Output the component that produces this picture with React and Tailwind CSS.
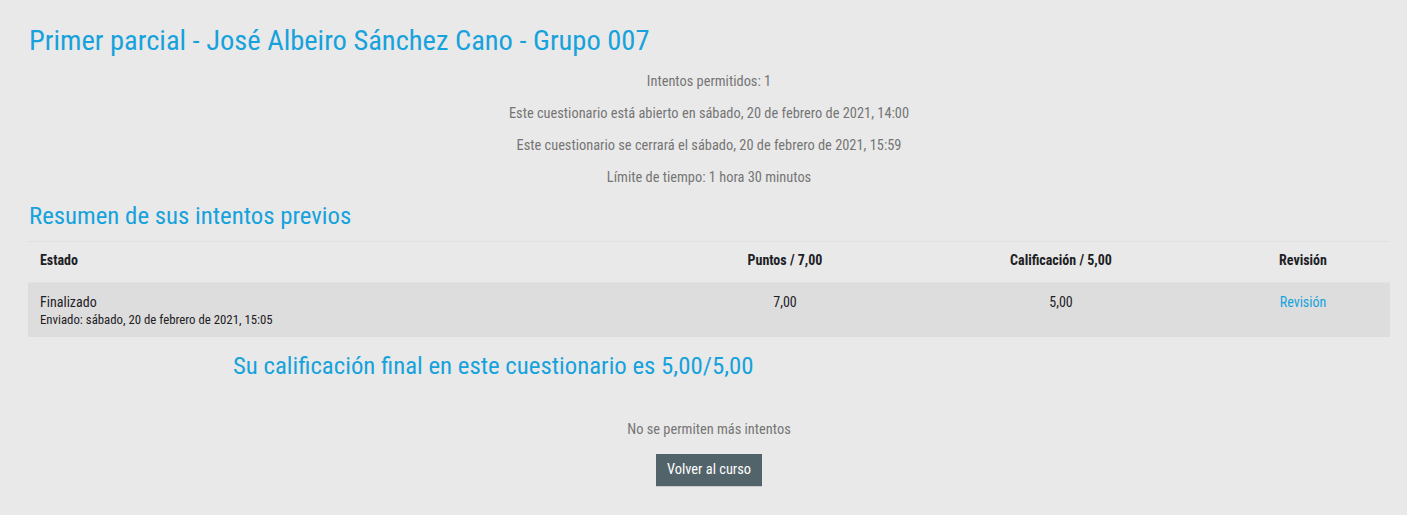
import React from 'react';

const font = { fontFamily: '"Roboto Condensed", Roboto, "Liberation Sans", sans-serif' };

const infoLines = [
    'Intentos permitidos: 1',
    'Este cuestionario está abierto en sábado, 20 de febrero de 2021, 14:00',
    'Este cuestionario se cerrará el sábado, 20 de febrero de 2021, 15:59',
    'Límite de tiempo: 1 hora 30 minutos',
];

export default function App() {
    return (
        <div className="min-h-[515px] bg-[#e9e9e9] pl-[28px] pr-[17px] pt-[24px] pb-[29px] [font-stretch:condensed]" style={font}>
            <h2 className="pl-px text-[28.5px] leading-[34px] text-[#16a2dc]">
                Primer parcial - José Albeiro Sánchez Cano - Grupo 007
            </h2>

            <div className="mt-[14px] flex flex-col items-center gap-3 text-[14.4px] leading-5 text-[#757575]">
                {infoLines.map((line) => (
                    <p key={line}>{line}</p>
                ))}
            </div>

            <h3 className="mt-[14px] pl-px text-[24.8px] leading-[28px] text-[#16a2dc]">
                Resumen de sus intentos previos
            </h3>

            <div className="mt-[11px] border-t border-[#dfe1e3] text-[14px]">
                <div className="grid h-[40px] grid-cols-[636px_242px_310px_174px] items-center pb-[3px] font-bold text-[#1d2125]">
                    <div className="pl-3">Estado</div>
                    <div className="text-center">Puntos / 7,00</div>
                    <div className="text-center">Calificación / 5,00</div>
                    <div className="text-center">Revisión</div>
                </div>
                <div className="grid h-[55px] grid-cols-[636px_242px_310px_174px] border-t border-[#e2e2e2] bg-[#dddddd] pt-[9px] text-[#1d2125]">
                    <div className="pl-3">
                        <div className="leading-5">Finalizado</div>
                        <div className="text-[12.8px] leading-4">Enviado: sábado, 20 de febrero de 2021, 15:05</div>
                    </div>
                    <div className="text-center leading-5">7,00</div>
                    <div className="text-center leading-5">5,00</div>
                    <div className="text-center leading-5">
                        <a href="#" className="text-[#16a2dc]">Revisión</a>
                    </div>
                </div>
            </div>

            <h3 className="mt-[14px] pl-[205px] text-[24.8px] leading-[30px] text-[#16a2dc]">
                Su calificación final en este cuestionario es 5,00/5,00
            </h3>

            <div className="mt-[39px] flex flex-col items-center">
                <p className="text-[14.4px] leading-5 text-[#757575]">No se permiten más intentos</p>
                <button className="mt-[14px] h-[33px] w-[106px] border-b border-[#c9c9c9] bg-[#526469] text-[14.4px] text-white">
                    Volver al curso
                </button>
            </div>
        </div>
    );
}
